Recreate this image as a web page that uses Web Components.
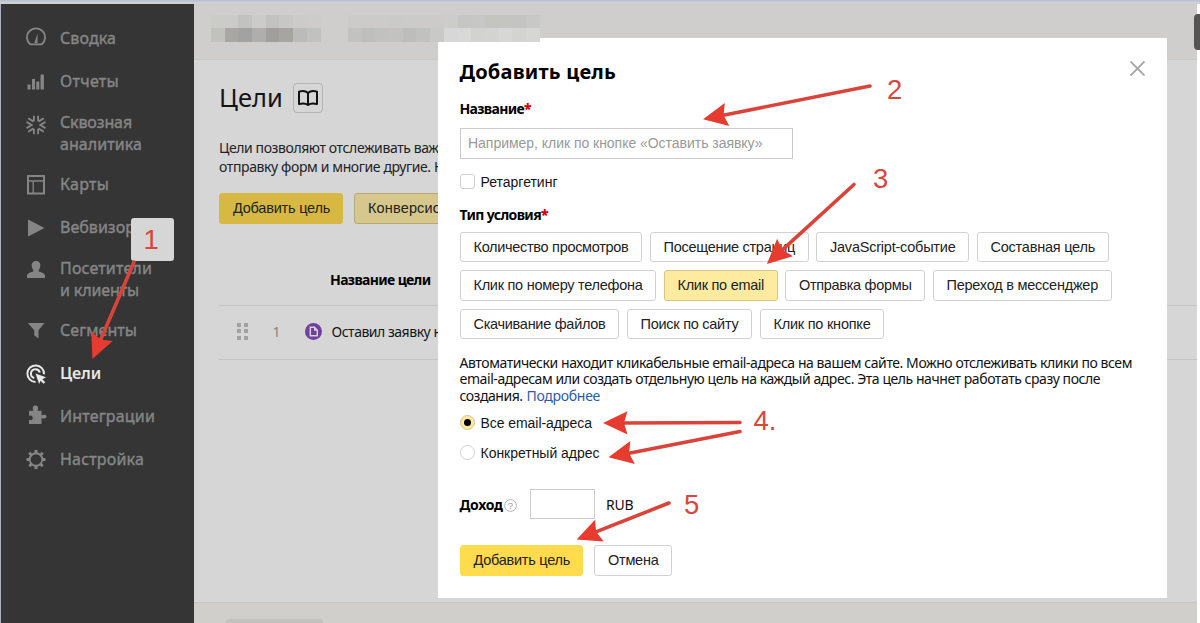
<!DOCTYPE html>
<html lang="ru">
<head>
<meta charset="utf-8">
<title>Цели</title>
<style>
    html, body { margin: 0; height: 100%; overflow: hidden; }
    body { font-family: "Noto Sans", "Open Sans", sans-serif; font-size: 14px; color: #151515; }
</style>
</head>
<body>
<metrika-app></metrika-app>

<script>
// Registers an element whose shadow root is built from render()
class BaseElement extends HTMLElement {
    constructor() {
        super();
        this.attachShadow({ mode: 'open' });
    }

    connectedCallback() {
        this.shadowRoot.innerHTML = this.render();
    }
}

const icons = {
    summary: '<path d="M4.2 17.5h11.6A9 9 0 1 0 4.2 17.5z" transform="translate(0 -.7)" fill="none" stroke="currentColor" stroke-width="1.8" stroke-linejoin="round"/><path d="M8.3 15.8 11.6 5.8 11.5 15.8z" fill="currentColor"/>',
    reports: '<path d="M1.500 12.500h3v5h-3zM6 7h3v10.500H6zM10.300 9.500h3v8h-3zM14.500 2.500h3.400v15h-3.400z" fill="currentColor"/>',
    through: '<path d="M7.900 .8v5.400M2.200 3.200 7.600 6.600M12.100 .8v5.400M17.800 3.200 12.400 6.600M7.900 19.200v-5.400M2.200 16.800l5.400-3.400M12.100 19.200v-5.400M17.800 16.800l-5.400-3.400M.6 6.900 5.600 10 .6 13.100M19.400 6.900 14.400 10l5 3.100" fill="none" stroke="currentColor" stroke-width="1.900"/>',
    maps: '<path d="M2 6.500h16M7.200 6.500V19" fill="none" stroke="currentColor" stroke-width="1.300"/><path d="M2 1.500h16v17.500H2z" fill="none" stroke="currentColor" stroke-width="2"/>',
    webvisor: '<path d="M2 1.500 18.500 10 2 18.500z" fill="currentColor"/>',
    visitors: '<path d="M10 1.500c3 0 4.600 2 4.300 5-.2 2.300-1.300 3.600-1.800 4.800-.3 1.500 6.500 1.700 6.500 5V18.500H1v-2.200c0-3.300 6.800-3.500 6.500-5C7 10.100 5.900 8.800 5.700 6.500c-.3-3 1.300-5 4.300-5z" fill="currentColor"/>',
    segments: '<path d="M1.800 3h16.700l-6 7.200v8.300l-4.300-3.300v-5z" fill="currentColor"/>',
    goals: '<g fill="none" stroke="currentColor" stroke-width="2"><path d="M9.500 18A8.300 8.300 0 1 1 18 10.200"/><path d="M8.200 14A4.500 4.500 0 1 1 13.800 8.600"/></g><path d="m9.500 9.500 10.500 3.800-3.600 1.900 2.900 3-1.800 1.500-2.900-3-1.500 3.200z" fill="currentColor"/>',
    integrations: '<path d="M3 6.300h4.500C5.800 2.900 7.300 1 9.500 1s3.500 2 2 5.300h4v4.500c2.500-1.200 5-.8 5 1.200s-2.500 2.600-5 1.500v6H3v-4.200c1.600.8 3.800.3 3.800-1.800S4.600 10.300 3 11.300z" fill="currentColor"/>',
    settings: '<circle cx="10" cy="10" r="6.300" fill="none" stroke="currentColor" stroke-width="1.900"/><path d="M10 .5v3.300M10 16.200v3.300M.5 10h3.300M16.200 10h3.300M3.300 3.300l2.200 2.200M14.500 14.500l2.200 2.200M3.300 16.700l2.200-2.200M14.500 5.500l2.200-2.200" stroke="currentColor" stroke-width="3"/>'
};

const menu = [
    { icon: 'summary', lines: [['Сводка', 56]], shift: -1.5 },
    { icon: 'reports', lines: [['Отчеты', 59]] },
    { icon: 'through', lines: [['Сквозная', 72], ['аналитика', 82]], shift: -9 },
    { icon: 'maps', lines: [['Карты', 49]], shift: -0.5 },
    { icon: 'webvisor', lines: [['Вебвизор', 75]] },
    { icon: 'visitors', lines: [['Посетители', 92], ['и клиенты', 79]], shift: -10.5 },
    { icon: 'segments', lines: [['Сегменты', 77]], shift: -1 },
    { icon: 'goals', lines: [['Цели', 41]], active: true },
    { icon: 'integrations', lines: [['Интеграции', 95]], shift: -2.5 },
    { icon: 'settings', lines: [['Настройка', 84]], shift: -0.5 }
];

const conditions = [
    [['Количество просмотров', 182.5], ['Посещение страниц', 159], ['JavaScript-событие', 153], ['Составная цель', 132]],
    [['Клик по номеру телефона', 196.5], ['Клик по email', 114, 'checked'], ['Отправка формы', 140], ['Переход в мессенджер', 179]],
    [['Скачивание файлов', 159.5], ['Поиск по сайту', 125.5], ['Клик по кнопке', 124.5]]
];

class SideMenu extends BaseElement {
    render() {
        return `
            <style>
                :host {
                    display: block;
                    box-sizing: border-box;
                    width: 194px;
                    padding: 13.500px 0 0 25px;
                    background: #353535;
                    border-left: 1px solid #a9b2bd;
                    color: #858585;
                    font-size: 16px;
                    line-height: 21.5px;
                    -webkit-text-stroke: 0.4px currentColor;
                }
                .item { display: flex; align-items: center; height: 43px; }
                .item.double { height: 60px; }
                .item.active { color: #e8e8e8; font-weight: 600; -webkit-text-stroke: 0; }
                svg { width: 20px; height: 20px; margin-right: 14px; overflow: visible; flex: none; }
                .label { display: flex; flex-direction: column; align-items: flex-start; }
            </style>
            ${menu.map(m => `
                <div class="item ${m.lines.length > 1 ? 'double' : ''} ${m.active ? 'active' : ''}">
                    <svg viewBox="0 0 20 20" style="transform: translateY(${m.shift || 0}px)">${icons[m.icon]}</svg>
                    <div class="label">${m.lines.map(([t, w]) => `<fit-text w="${w}">${t}</fit-text>`).join('')}</div>
                </div>`).join('')}
        `;
    }
}

class UiButton extends BaseElement {
    render() {
        return `
            <style>
                :host {
                    display: flex;
                    align-items: center;
                    box-sizing: border-box;
                    height: 30.5px;
                    padding-left: 13px;
                    border: 1px solid #d2d2d2;
                    border-radius: 3px;
                    background: #fff;
                    font: 14.5px/28px "Liberation Sans", Arial, sans-serif;
                    color: #222;
                    white-space: nowrap;
                    flex: none;
                }
                :host([kind=action]) { background: #ffdb4d; border-color: #ffdb4d; }
                :host([kind=checked]) { background: #ffeba0; border-color: #d6c68a; }
                :host([kind=dim-action]) { background: #d7b843; border-color: #d7b843; }
                :host([kind=dim-checked]) { background: #d6c78d; border-color: #b5a873; }
            </style>
            <slot></slot>
        `;
    }
}

// Checkbox or radio with its label
class UiOption extends BaseElement {
    render() {
        return `
            <style>
                :host {
                    display: flex;
                    align-items: center;
                    height: 30px;
                    font: 14px/20px "Liberation Sans", Arial, sans-serif;
                    color: #151515;
                }
                .box {
                    display: flex;
                    align-items: center;
                    justify-content: center;
                    box-sizing: border-box;
                    width: 15px;
                    height: 15px;
                    margin-right: 6px;
                    border: 1px solid #cfcfcf;
                    border-radius: 3px;
                    background: #fff;
                }
                :host([round]) .box { border-radius: 50%; }
                :host([checked]) .box { background: #ffe9a0; border-color: #d2c48c; }
                :host([checked]) .box::after { content: ""; width: 7px; height: 7px; border-radius: 50%; background: #000; }
            </style>
            <span class="box"></span><slot></slot>
        `;
    }
}

class GoalsPage extends BaseElement {
    render() {
        return `
            <style>
                :host { display: flex; flex-direction: column; flex: 1; min-width: 0; background: #d6d6d6; }
                header { height: 55px; background: #cfcecc; border-bottom: 1px solid #c8c8c7; flex: none; }
                main { flex: 1; padding: 22px 0 0 25px; overflow: hidden; }
                .head { display: flex; align-items: center; height: 32px; gap: 10px; }
                h1 { margin: -2px 0 0; font-size: 25.5px; font-weight: 400; line-height: 32px; }
                .book {
                    display: flex;
                    align-items: center;
                    justify-content: center;
                    box-sizing: border-box;
                    width: 30px;
                    height: 30px;
                    border: 1px solid #b4b4b4;
                    border-radius: 4px;
                }
                .intro { display: flex; flex-direction: column; align-items: flex-start; margin-top: 24px; line-height: 19px; color: #222; }
                .actions { display: flex; gap: 11px; margin-top: 17px; }
                .thead { display: flex; align-items: center; height: 50px; padding: 31px 0 0 111px; font-weight: 700; color: #000; }
                .row { display: flex; align-items: center; height: 53px; border: solid #c4c4c4; border-width: 1px 0; }
                .row > * { position: relative; top: -1px; }
                .grip { display: grid; grid-template-columns: 4px 4px; grid-auto-rows: 4px; gap: 2.5px; margin-left: 18px; }
                .grip i { background: #a2a2a2; }
                .num { margin-left: 25px; width: 32px; color: #858585; }
                .row svg { margin-right: 10px; }
                footer { display: flex; height: 20px; align-items: flex-end; padding-left: 32px; background: #d0cfcc; border-top: 1px solid #c5c5c4; flex: none; }
                footer div { width: 97px; height: 4px; border-radius: 3px 3px 0 0; background: #c4c2be; }
            </style>
            <header></header>
            <main>
                <div class="head">
                    <h1><fit-text w="64">Цели</fit-text></h1>
                    <span class="book">
                        <svg width="20" height="16" viewBox="0 0 20 16" fill="none" stroke="#111" stroke-width="2" stroke-linejoin="round"><path d="M10 3C8 1 4 .8 1 1.600v12.400c3-.8 7-.6 9 1 2-1.600 6-1.800 9-1V1.600C16 .8 12 1 10 3zM10 3v12"/></svg>
                    </span>
                </div>
                <div class="intro">
                    <fit-text w="219.5">Цели позволяют отслеживать важ</fit-text>
                    <fit-text w="225">отправку форм и многие другие. Н</fit-text>
                </div>
                <div class="actions">
                    <ui-button kind="dim-action" style="width:124px"><fit-text w="97">Добавить цель</fit-text></ui-button>
                    <ui-button kind="dim-checked" style="width:140px"><fit-text w="73">Конверсио</fit-text></ui-button>
                </div>
                <div class="thead"><fit-text w="100.5">Название цели</fit-text></div>
                <div class="row">
                    <span class="grip"><i></i><i></i><i></i><i></i><i></i><i></i></span>
                    <span class="num">1</span>
                    <svg width="17" height="17" viewBox="0 0 17 17"><circle cx="8.5" cy="8.5" r="8.5" fill="#70409a"/><path d="M5.300 4.300h4.200l2.800 2.900v5.500h-7z" fill="none" stroke="#d8d0df" stroke-width="1.500"/><path d="M9 4v3.700h3.500z" fill="#d8d0df"/></svg>
                    <fit-text w="110">Оставил заявку н</fit-text>
                </div>
            </main>
            <footer><div></div></footer>
        `;
    }
}

class GoalDialog extends BaseElement {
    render() {
        return `
            <style>
                :host {
                    display: flex;
                    flex-direction: column;
                    box-sizing: border-box;
                    width: 729px;
                    height: 560px;
                    padding: 19px 0 0 21.5px;
                    background: #fff;
                    color: #111;
                }
                .top { display: flex; justify-content: space-between; padding-right: 22px; height: 30px; align-items: center; }
                .top svg { margin-top: -7px; }
                h2 { margin: 0; font-size: 20px; line-height: 30px; color: #000; }
                .label { display: flex; align-items: center; height: 20px; font-weight: 700; color: #000; }
                .label b { color: #d8000c; }
                .input { display: flex; align-items: center; box-sizing: border-box; border: 1px solid #cbcbcb; }
                .name { width: 333px; height: 30.5px; margin-top: 10px; padding-left: 7.5px; font: 14px "Liberation Sans", Arial, sans-serif; color: #999; }
                .retarget { margin-top: 8px; }
                .type { margin-top: 8px; }
                .rows { display: flex; flex-direction: column; gap: 8px; margin-top: 7px; }
                .rows div { display: flex; gap: 7.5px; }
                .hint { display: flex; flex-direction: column; align-items: flex-start; line-height: 16.5px; margin-top: 15.5px; }
                .hint div { display: flex; gap: 4px; }
                .link { color: #2c5ca8; }
                .options { margin-top: 3.5px; }
                .income { display: flex; align-items: center; height: 30px; margin-top: 21.5px; }
                .income .input { width: 65px; height: 30px; margin: 0 10.5px 0 13px; }
                .income svg { margin: 2px 0 0 2px; }
                .q { font: 9px "Liberation Sans", sans-serif; fill: #999; }
                .buttons { display: flex; gap: 11px; margin-top: 26px; }
            </style>
            <div class="top">
                <h2><fit-text w="156.5">Добавить цель</fit-text></h2>
                <svg width="15" height="15" viewBox="0 0 15 15" stroke="#a6a6a6" stroke-width="1.900"><path d="M.5.500l14 14M14.500.500l-14 14"/></svg>
            </div>
            <div class="label" style="margin-top:11px"><fit-text w="64.5">Название</fit-text><b>*</b></div>
            <div class="input name"><fit-text w="294.5">Например, клик по кнопке «Оставить заявку»</fit-text></div>
            <ui-option class="retarget"><fit-text w="77">Ретаргетинг</fit-text></ui-option>
            <div class="label type"><fit-text w="81.5">Тип условия</fit-text><b>*</b></div>
            <div class="rows">
                ${conditions.map(row => `<div>${row.map(([t, w, kind]) =>
                    `<ui-button kind="${kind || ''}" style="width:${w}px"><fit-text w="${w - 27.5}">${t}</fit-text></ui-button>`).join('')}</div>`).join('')}
            </div>
            <div class="hint">
                <fit-text w="672.5">Автоматически находит кликабельные email-адреса на вашем сайте. Можно отслеживать клики по всем</fit-text>
                <fit-text w="640.5">email-адресам или создать отдельную цель на каждый адрес. Эта цель начнет работать сразу после</fit-text>
                <div><fit-text w="63">создания.</fit-text><fit-text class="link" w="73.5">Подробнее</fit-text></div>
            </div>
            <div class="options">
                <ui-option round checked><fit-text w="111.5">Все email-адреса</fit-text></ui-option>
                <ui-option round><fit-text w="119">Конкретный адрес</fit-text></ui-option>
            </div>
            <div class="income">
                <span class="label"><fit-text w="43">Доход</fit-text></span>
                <svg width="13" height="13" viewBox="0 0 13 13"><circle cx="6.5" cy="6.5" r="5.9" fill="none" stroke="#b5b5b5"/><text class="q" x="4" y="9.8">?</text></svg>
                <span class="input"></span>
                <fit-text w="27.5">RUB</fit-text>
            </div>
            <div class="buttons">
                <ui-button kind="action" style="width:123.5px"><fit-text w="96.5">Добавить цель</fit-text></ui-button>
                <ui-button style="width:78px"><fit-text w="50.5">Отмена</fit-text></ui-button>
            </div>
        `;
    }
}

// Pixelated area that hides the account data in the header
class PixelMask extends BaseElement {
    render() {
        const rows = this.getAttribute('colors').split('|').map(r => r.trim().split(' '));
        return `
            <style>
                :host { display: block; }
                div { display: flex; }
                i { width: 13.7px; height: 13.7px; }
            </style>
            ${rows.map(r => `<div>${r.map(c => `<i style="background:#${c}"></i>`).join('')}</div>`).join('')}
        `;
    }
}

class StepNotes extends BaseElement {
    arrow([x1, y1, x2, y2]) {
        const len = Math.hypot(x2 - x1, y2 - y1);
        const angle = Math.atan2(y1 - y2, x1 - x2) * 180 / Math.PI;
        return `
            <g transform="translate(${x2} ${y2}) rotate(${angle})">
                <path d="M18 0H${len}" stroke="#d9433a" stroke-width="3.6" stroke-linecap="round"/>
                <path d="M-1.500 0 23-11.700 19.500 0 23 11.700z" fill="#e63c30"/>
            </g>`;
    }

    render() {
        const arrows = [
            [134, 262, 93, 357.5],
            [870, 86, 704.5, 119],
            [854, 184.5, 768, 263],
            [740, 422.5, 604.5, 423],
            [740, 431.5, 610, 457],
            [669, 503, 578, 539]
        ];
        const digits = [['1', 143.5, 249], ['2', 887, 98.5], ['3', 873, 188], ['4.', 753.5, 430], ['5', 684, 514]];
        return `
            <style>
                :host { display: block; }
                text { font: 27.5px "Liberation Sans", Arial, sans-serif; fill: #d9463c; }
            </style>
            <svg width="1200" height="623" viewBox="0 0 1200 623">
                <rect x="131" y="218" width="43" height="43" rx="3" fill="#d6d6d6"/>
                ${arrows.map(a => this.arrow(a)).join('')}
                ${digits.map(([t, x, y]) => `<text x="${x}" y="${y}">${t}</text>`).join('')}
            </svg>
        `;
    }
}

class MetrikaApp extends BaseElement {
    render() {
        return `
            <style>
                :host { display: flex; flex-direction: column; position: relative; width: 1200px; height: 623px; overflow: hidden; }
                .edge { height: 3px; background: linear-gradient(#b8c3d1 1px, #cdd1d8 2px, #d4d3d3); border-bottom: 1px solid #cfcecc; flex: none; }
                .body { display: flex; flex: 1; min-height: 0; }
                .scroll { width: 3px; background: #fff; }
                goal-dialog { position: absolute; left: 438px; top: 38px; }
                pixel-mask { position: absolute; left: 211px; top: 14.5px; }
                pixel-mask + pixel-mask { left: 348px; }
                .tab { position: absolute; left: 1194px; top: 14px; width: 12px; height: 36px; border-radius: 4px; background: #555; }
                step-notes { position: absolute; left: 0; top: 0; }
            </style>
            <div class="edge"></div>
            <div class="body">
                <side-menu></side-menu>
                <goals-page></goals-page>
                <div class="scroll"></div>
            </div>
            <goal-dialog></goal-dialog>
            <pixel-mask colors="cbcbc8 cbcbc9 c2c2c0 cbcbc9 c2c2c0 c7c7c5 cccbc9 cdccca|c1c1be a8a7a4 a2a2a2 aeaead a09f9d a6a5a2 bbbbba c1c1c0"></pixel-mask>
            <pixel-mask colors="cbcbc9 cccbc9 cccbca cacac8 cbcbc9 cccbca cccbc9 cccccb c6c6c4 c7c7c5 c4c4c0 c4c4c0 c4c5c2 c8c8c6|c2c2c0 bebebd c1c1c0 c2c2c1 bdbdbc c1c1bf c9c9c8 d7d7d7 d8d8d8 d2d3d1 d3d3d2 d7d7d6 d3d3d1 d6d6d4"></pixel-mask>
            <div class="tab"></div>
            <step-notes></step-notes>
        `;
    }
}

// One line of text, tracked so that it takes exactly w pixels
class FitText extends HTMLElement {
    constructor() {
        super();
        this.attachShadow({ mode: 'open' });
        this.shadowRoot.innerHTML = `
            <style>:host { display: inline-block; white-space: nowrap; }</style>
            <slot></slot>
        `;
    }

    connectedCallback() {
        const extra = parseFloat(this.getAttribute('w')) - this.getBoundingClientRect().width;
        this.style.letterSpacing = (extra / this.textContent.length).toFixed(3) + 'px';
    }
}

customElements.define('metrika-app', MetrikaApp);
customElements.define('side-menu', SideMenu);
customElements.define('goals-page', GoalsPage);
customElements.define('goal-dialog', GoalDialog);
customElements.define('ui-button', UiButton);
customElements.define('ui-option', UiOption);
customElements.define('pixel-mask', PixelMask);
customElements.define('step-notes', StepNotes);
// defined last: it measures text that the elements above have styled
customElements.define('fit-text', FitText);
</script>
</body>
</html>
